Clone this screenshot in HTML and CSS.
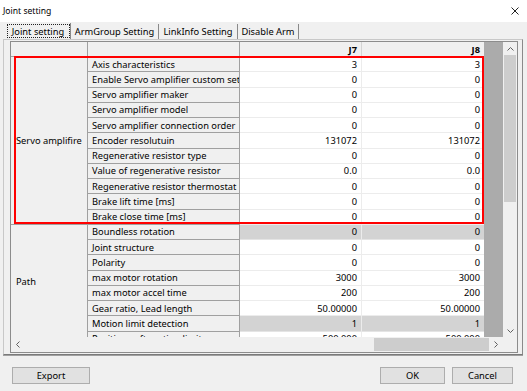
FILE: index.html
```html
<!DOCTYPE html>
<html lang="en">
  <head>
    <meta charset="UTF-8" />
    <meta name="viewport" content="width=device-width, initial-scale=1.0" />
    <title>Joint setting</title>
    <link rel="stylesheet" href="styles.css">
  </head>

  <body>
    <div class="titlebar">
      <span class="title">Joint setting</span>
      <svg class="close" width="8" height="8" viewBox="0 0 8 8">
        <path d="M0.5 0.5 L7.5 7.5 M7.5 0.5 L0.5 7.5" stroke="#222" stroke-width="1" fill="none" />
      </svg>
    </div>

    <div class="tabs">
      <div class="tab active tab-joint">Joint setting</div>
      <div class="tab tab-arm">ArmGroup Setting</div>
      <div class="tab tab-link">LinkInfo Setting</div>
      <div class="tab tab-disable">Disable Arm</div>
    </div>

    <div class="panel">
      <div class="grid-frame">
        <div class="grid-main">
          <div class="viewport">
            <div class="sheet">
              <!-- header -->
              <div class="head"></div>
              <div class="head"></div>
              <div class="head num">J7</div>
              <div class="head num last">J8</div>

              <!-- Servo amplifire -->
              <div class="group span-11">Servo amplifire</div>
              <div class="name">Axis characteristics</div><div class="val">3</div><div class="val last">3</div>
              <div class="name">Enable Servo amplifier custom setting</div><div class="val">0</div><div class="val last">0</div>
              <div class="name">Servo amplifier maker</div><div class="val">0</div><div class="val last">0</div>
              <div class="name">Servo amplifier model</div><div class="val">0</div><div class="val last">0</div>
              <div class="name">Servo amplifier connection order</div><div class="val">0</div><div class="val last">0</div>
              <div class="name">Encoder resolutuin</div><div class="val">131072</div><div class="val last">131072</div>
              <div class="name">Regenerative resistor type</div><div class="val">0</div><div class="val last">0</div>
              <div class="name">Value of regenerative resistor</div><div class="val">0.0</div><div class="val last">0.0</div>
              <div class="name">Regenerative resistor thermostat</div><div class="val">0</div><div class="val last">0</div>
              <div class="name">Brake lift time [ms]</div><div class="val">0</div><div class="val last">0</div>
              <div class="name">Brake close time [ms]</div><div class="val">0</div><div class="val last">0</div>

              <!-- Path -->
              <div class="group span-8 path">Path</div>
              <div class="name">Boundless rotation</div><div class="val off">0</div><div class="val off last">0</div>
              <div class="name">Joint structure</div><div class="val">0</div><div class="val last">0</div>
              <div class="name">Polarity</div><div class="val">0</div><div class="val last">0</div>
              <div class="name">max motor rotation</div><div class="val">3000</div><div class="val last">3000</div>
              <div class="name">max motor accel time</div><div class="val">200</div><div class="val last">200</div>
              <div class="name">Gear ratio, Lead length</div><div class="val">50.00000</div><div class="val last">50.00000</div>
              <div class="name">Motion limit detection</div><div class="val off">1</div><div class="val off last">1</div>
              <div class="name">Position soft motion limit</div><div class="val">500.000</div><div class="val last">500.000</div>
            </div>
            <div class="highlight"></div>
          </div>

          <div class="vscroll">
            <div class="sb-btn">
              <svg width="7" height="4" viewBox="0 0 7 4"><polyline points="0.5,3.5 3.5,0.5 6.5,3.5" fill="none" stroke="#606060" /></svg>
            </div>
            <div class="vtrack"><div class="vthumb"></div></div>
            <div class="sb-btn">
              <svg width="7" height="4" viewBox="0 0 7 4"><polyline points="0.5,0.5 3.5,3.5 6.5,0.5" fill="none" stroke="#606060" /></svg>
            </div>
          </div>
        </div>

        <div class="hscroll">
          <div class="sb-btn">
            <svg width="4" height="7" viewBox="0 0 4 7"><polyline points="3.5,0.5 0.5,3.5 3.5,6.5" fill="none" stroke="#606060" /></svg>
          </div>
          <div class="htrack"><div class="hthumb"></div></div>
          <div class="sb-btn">
            <svg width="4" height="7" viewBox="0 0 4 7"><polyline points="0.5,0.5 3.5,3.5 0.5,6.5" fill="none" stroke="#606060" /></svg>
          </div>
          <div class="corner"></div>
        </div>
      </div>
    </div>

    <div class="footer">
      <button class="btn btn-export">Export</button>
      <button class="btn btn-ok">OK</button>
      <button class="btn btn-cancel">Cancel</button>
    </div>
  </body>
</html>
```

FILE: styles.css
```css
/* Basic reset */
* {
  margin: 0;
  padding: 0;
  box-sizing: border-box;
}

body {
  font-family: "Noto Sans", sans-serif;
  font-size: 9.3px;
  color: #000;
  background-color: #f0f0f0;
  width: 527px;
  height: 391px;
  overflow: hidden;
}

/* window title */
.titlebar {
  height: 22px;
  background-color: #fff;
  display: flex;
  align-items: center;
  justify-content: space-between;
  padding: 0 8px 1px 3px;
}

.title {
  font-size: 8.6px;
}

/* tab strip */
.tabs {
  height: 17px;
  display: flex;
  align-items: flex-end;
  padding-left: 6px;
}

.tab {
  height: 15px;
  display: flex;
  align-items: center;
  justify-content: center;
  border-right: 1px solid #8a8a8a;
  white-space: nowrap;
}

.tab.active {
  height: 16px;
  outline: 1px dotted #222;
  outline-offset: -2px;
}

.tab-joint { width: 65px; }
.tab-arm { width: 88px; }
.tab-link { width: 79px; }
.tab-disable { width: 61px; }

/* tab page */
.panel {
  margin-left: 3px;
  width: 520px;
  height: 316px;
  border: 1px solid #c8c8c8;
  border-right-color: #8a8a8a;
  border-bottom-color: #7a7a7a;
  box-shadow: 0 1px 0 #a0a0a0;
  padding: 1px 4px 1px 6px;
}

.grid-frame {
  width: 508px;
  height: 312px;
  border: 1px solid #8c8c8c;
  display: flex;
  flex-direction: column;
}

.grid-main {
  display: flex;
  height: 295px;
}

.viewport {
  position: relative;
  width: 492px;
  overflow: hidden;
  background-color: #ababab;
}

.sheet {
  display: grid;
  grid-template-columns: 77px 152px 122px 122px;
  grid-template-rows: 15px;
  grid-auto-rows: 15.25px;
  width: 473px;
}

.sheet > div {
  display: flex;
  align-items: center;
  white-space: nowrap;
  overflow: hidden;
}

.head {
  background-color: #f0f0f0;
  border-right: 1px solid #a0a0a0;
  border-bottom: 1px solid #a0a0a0;
  font-weight: bold;
}

.head.num {
  justify-content: flex-end;
  padding-right: 4px;
  border-right-color: #d4d4d4;
}

.group {
  background-color: #f0f0f0;
  border-right: 1px solid #a0a0a0;
  border-bottom: 1px solid #a0a0a0;
  padding-left: 5px;
}

.span-11 { grid-row: span 11; }
.span-8 { grid-row: span 8; }

.group.path {
  padding-bottom: 7px;
}

.name {
  background-color: #f0f0f0;
  border-right: 1px solid #a0a0a0;
  border-bottom: 1px solid #a0a0a0;
  padding-left: 4px;
}

.val {
  background-color: #fff;
  border-right: 1px solid #ececec;
  border-bottom: 1px solid #ececec;
  justify-content: flex-end;
  padding-right: 4px;
}

.val.off {
  background-color: #d3d3d3;
  border-bottom-color: #e4e4e4;
}

.sheet .last {
  border-right: none;
}

/* red annotation box drawn over the servo rows */
.highlight {
  position: absolute;
  left: 3px;
  top: 14px;
  width: 470px;
  height: 168px;
  border: 2px solid #f00;
}

/* scrollbars */
.vscroll {
  width: 14px;
  display: flex;
  flex-direction: column;
  background-color: #f0f0f0;
}

.sb-btn {
  flex: 0 0 13px;
  display: flex;
  align-items: center;
  justify-content: center;
}

.vtrack {
  flex: 1;
  padding: 0 1px;
}

.vthumb {
  height: 147px;
  background-color: #cdcdcd;
}

.hscroll {
  height: 15px;
  display: flex;
  background-color: #f0f0f0;
}

.hscroll .sb-btn {
  flex: 0 0 14px;
}

.htrack {
  flex: 1;
  display: flex;
  justify-content: flex-end;
  padding: 1px 0;
}

.hthumb {
  width: 115px;
  background-color: #cdcdcd;
}

.corner {
  flex: 0 0 14px;
}

/* dialog buttons */
.footer {
  display: flex;
  padding: 12px 14px 0 12px;
}

.btn {
  height: 17px;
  font-family: inherit;
  font-size: 9.3px;
  color: #000;
  background-color: #e1e1e1;
  border: 1px solid #adadad;
}

.btn-export { width: 78px; }

.btn-ok {
  width: 65px;
  margin-left: auto;
}

.btn-cancel {
  width: 61px;
  margin-left: 7px;
}
```
